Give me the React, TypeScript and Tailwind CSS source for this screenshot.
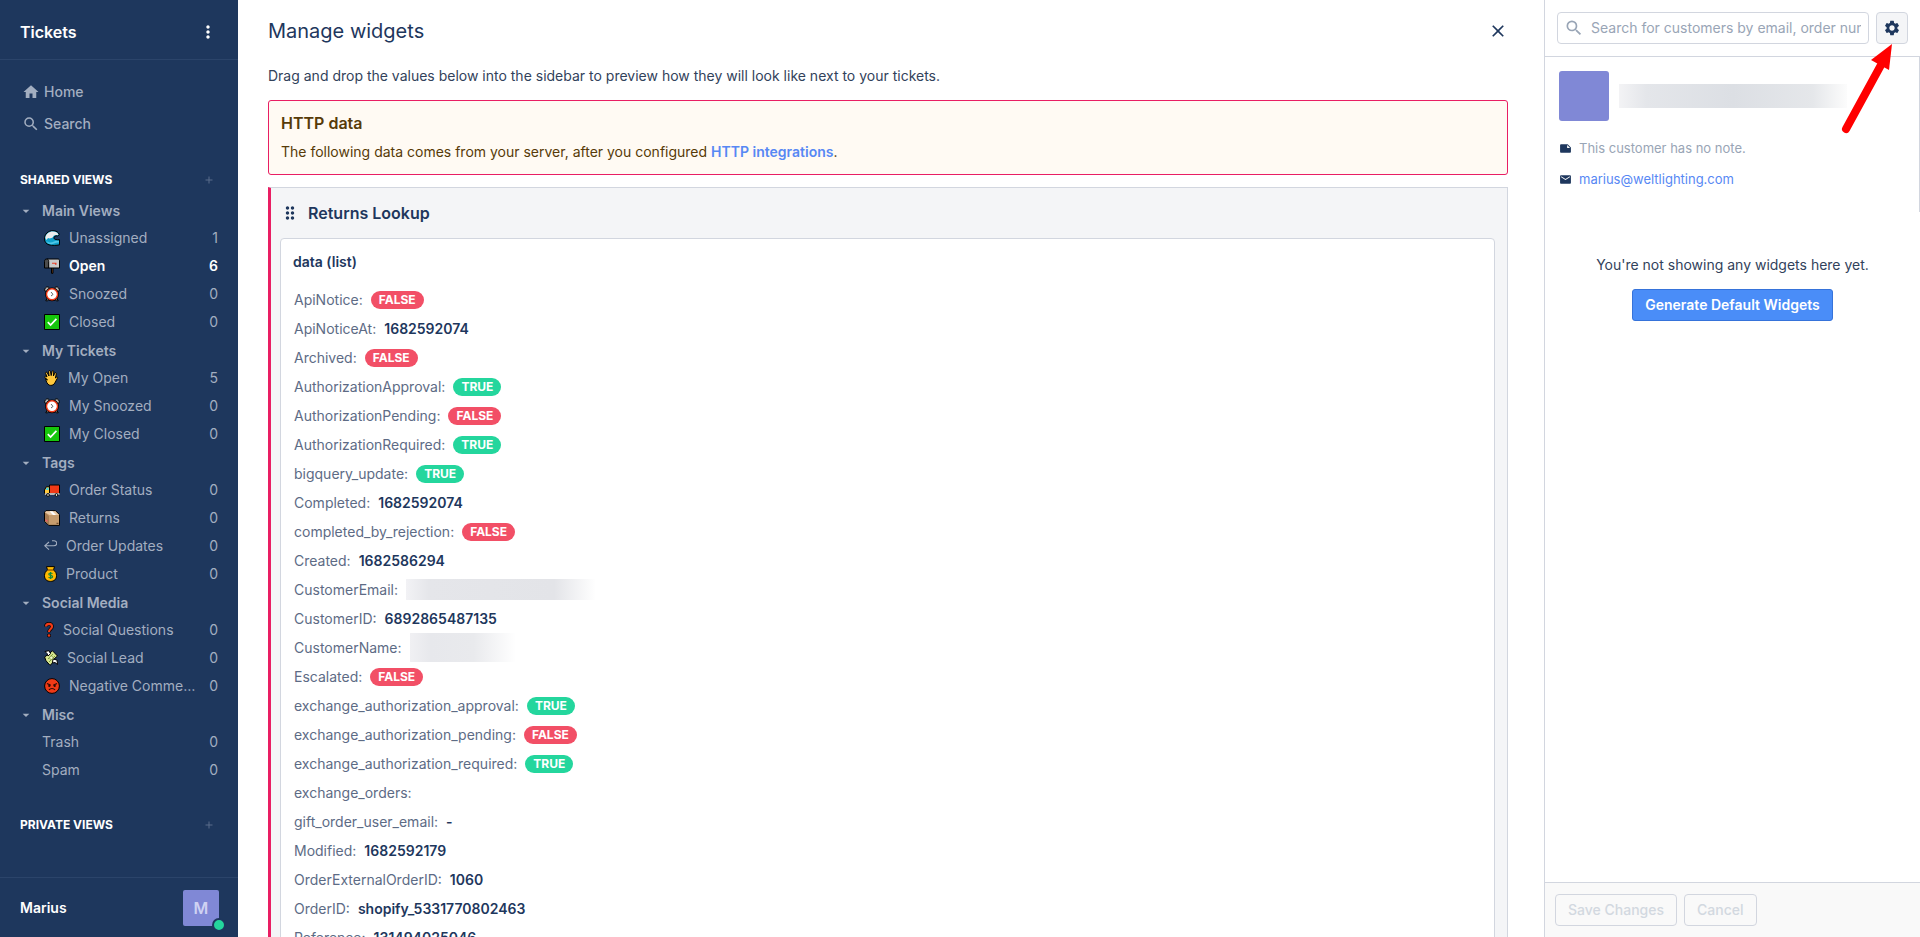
import type { ReactNode } from "react";
import {
  MdAdd,
  MdArrowDropDown,
  MdClose,
  MdDragIndicator,
  MdEmail,
  MdHome,
  MdMoreVert,
  MdNote,
  MdSearch,
  MdSettings,
} from "react-icons/md";

type IconName =
  | "wave"
  | "mailbox"
  | "clock"
  | "check"
  | "hand"
  | "truck"
  | "package"
  | "reply"
  | "moneybag"
  | "question"
  | "cash"
  | "angry";

const outline = { stroke: "#000", strokeWidth: 1, strokeLinejoin: "round" as const };

const icons: Record<IconName, { width: number; art: ReactNode }> = {
  wave: {
    width: 16,
    art: (
      <>
        <path d="M.5 9C.5 4 4 .7 9 .7c3.200 0 5.600 1.500 6.300 4l-1.700 1.200C11.500 5.400 9.600 6.500 10 8.300c.4 1.300 2.400 1.600 5.500 1.400v5.100c-3 .7-7.500.9-10.500 0C2.300 14 .5 12 .5 9z" fill="#0fa0cb" {...outline} />
        <path d="M1.300 8C1.800 3.800 5 1.400 8.800 1.400c2.800 0 4.800 1.100 5.700 3l-1.300.8c-2-.6-3.700.1-4.300 2L7.500 8 5.500 8.500 4 8 2.500 10z" fill="#ececec" />
        <path d="M2 10.500c2 2.500 5.500 2.500 8 1s4-.5 5-.5v1.500c-2 0-3.500 0-5 1-3 1.500-6 1-8-3z" fill="#4fc8e8" />
      </>
    ),
  },
  mailbox: {
    width: 16,
    art: (
      <>
        <path d="M7.500 9h1.500v6.300h-1.500z" fill="#8a4b1c" {...outline} />
        <path d="M3 1h11c1 0 1.500.8 1.500 2v7h-11z" fill="#c9c9c9" {...outline} />
        <path d="M.5 3.500C.5 2 1.300 1 2.700 1s2 1 2 2.500V10H.5z" fill="#4c4c4c" {...outline} />
        <path d="M8 4.700h4.500v2H11v-1H8z" fill="#e8402a" />
      </>
    ),
  },
  clock: {
    width: 16,
    art: (
      <>
        <path d="M3 12.500l-1.200 2.300h2l1-1.300M13 12.500l1.200 2.300h-2l-1-1.300" fill="#b4b4b4" {...outline} />
        <path d="M.6 4.600C.4 2.500 1.800.8 4 .8l1.500 1.100-3.200 3.600zM15.400 4.600c.2-2.100-1.200-3.800-3.400-3.800l-1.500 1.100 3.200 3.600z" fill="#b4b4b4" {...outline} />
        <circle cx="8" cy="8.300" r="5.900" fill="#fff" stroke="#000" strokeWidth="2" />
        <circle cx="8" cy="8.300" r="5.500" fill="#fff" stroke="#f03a17" strokeWidth="1.400" />
        <path d="M7 6l2 2.400L7 10" fill="none" stroke="#555" strokeWidth=".9" />
      </>
    ),
  },
  check: {
    width: 16,
    art: (
      <>
        <path d="M.5.5h15v15H.5z" fill="#16c60c" {...outline} />
        <path d="M3.800 8.200l2.800 2.900 5.800-6.300" fill="none" stroke="#fff" strokeWidth="1.700" />
      </>
    ),
  },
  hand: {
    width: 15,
    art: (
      <path d="M3.500 10L1 7.500C.3 6.500 1.300 5.800 2.200 6.500L3 7 1.600 3.400c-.3-1.300 1.200-1.700 1.700-.6L5 6 4.600 1.700C4.600.4 6.200.3 6.500 1.500L7.200 5.600 8 1.500C8.300.3 9.900.5 9.800 1.800L9.400 6l1.300-2.700c.6-1.100 2-.6 1.600.7L11.400 8l1-.8c.8-.6 1.600.2 1 1L10.800 13c-1 1.700-2.300 2.400-4 2.400-2.400 0-3.700-1.800-4.600-4.400L1.500 8.500z" fill="#ffc83d" {...outline} />
    ),
  },
  truck: {
    width: 16,
    art: (
      <>
        <path d="M5.500 3h10v8.500h-10z" fill="#f03a17" {...outline} />
        <path d="M.5 12.200V8l1.800-3.200h3.200v7.400z" fill="#ffc83d" {...outline} />
        <path d="M1.800 8l1-2.200h1.700V8z" fill="#37d8ef" />
        <path d="M.8 11h14.700v2H.8z" fill="#b4b4b4" />
        <circle cx="4" cy="13" r="1.400" fill="#e8e8e8" {...outline} />
        <circle cx="12.500" cy="13" r="1.400" fill="#e8e8e8" {...outline} />
      </>
    ),
  },
  package: {
    width: 16,
    art: (
      <>
        <path d="M.5 2.200L2 .7h9.500l4 4v10.700H5L.5 11.500z" fill="#c69c6d" {...outline} />
        <path d="M1 2.500L5 6v9L1 11.300z" fill="#a67c52" />
        <path d="M1 2.300L2.300 1.200h9L15 5H5.500z" fill="#e9cba8" />
        <path d="M5.500 1.200h3L12 5H9z" fill="#fff" />
        <path d="M1.500 9l2 1.500V12l-2-1.300z" fill="#f15a6b" />
        <path d="M12.500 13.300h2" stroke="#5b3b1e" strokeWidth="1" />
      </>
    ),
  },
  reply: {
    width: 13,
    art: (
      <path d="M5 4L.8 7.800 5 11.600M1 7.800h8.700c4 0 4-5 .3-5H8" fill="none" stroke="#a3aec0" strokeWidth="1.100" />
    ),
  },
  moneybag: {
    width: 13,
    art: (
      <>
        <path d="M2.500.6h8L9.500 4c2 1.300 3 3.300 3 5.600 0 3.800-2.300 5.800-6 5.800S.5 13.400.5 9.600C.5 7.300 1.500 5.300 3.500 4z" fill="#ffb900" {...outline} />
        <path d="M3 4h7" stroke="#6b3d00" strokeWidth="1" />
        <path d="M8.500 7.700c-.8-1-3.700-1-3.700.5s3.800 1 3.800 2.500-3 1.600-4 .5M6.600 6v7" fill="none" stroke="#10893e" strokeWidth="1.200" />
      </>
    ),
  },
  question: {
    width: 10,
    art: (
      <>
        <path d="M2 4.500C2 2.500 3.200 1.800 5 1.800s3 1 3 2.700C8 7 5 7 5 10.300" fill="none" stroke="#000" strokeWidth="3.600" />
        <circle cx="5" cy="13.500" r="2" fill="#000" />
        <path d="M2 4.500C2 2.500 3.200 1.800 5 1.800s3 1 3 2.700C8 7 5 7 5 10" fill="none" stroke="#f03a17" strokeWidth="2.200" />
        <circle cx="5" cy="13.500" r="1.300" fill="#f03a17" />
      </>
    ),
  },
  cash: {
    width: 14,
    art: (
      <>
        <path d="M.6 7L4 4.500 8.500.8l5 5.200-3.300 2.800L8 13.500l-2 1.800-4-4.500z" fill="#d5e58f" {...outline} />
        <path d="M1 1.500l4-.8 1.500 3L4 6 3 3.500zM9 9l4 1 .5 4.500-2.500-2-2.500.5z" fill="#fff" {...outline} />
        <path d="M4 9l5-5M5 12l6-6" stroke="#7c9a3d" strokeWidth="1" />
        <circle cx="7.300" cy="7.800" r="1.700" fill="#f3f8cf" stroke="#7c9a3d" strokeWidth=".7" />
      </>
    ),
  },
  angry: {
    width: 16,
    art: (
      <>
        <circle cx="8" cy="8" r="7.400" fill="#f03a17" {...outline} />
        <path d="M3 5.500l3.800 1.700M13 5.500L9.200 7.200M5 12c1.500-2 4.500-2 6 0" fill="none" stroke="#2b0b05" strokeWidth="1.200" />
        <circle cx="5.300" cy="7.900" r="1.100" fill="#2b0b05" />
        <circle cx="10.700" cy="7.900" r="1.100" fill="#2b0b05" />
      </>
    ),
  },
};

function ViewIcon({ name }: { name: IconName }) {
  const { width, art } = icons[name];
  return (
    <svg width={width} height={16} viewBox={`0 0 ${width} 16`} className="shrink-0" aria-hidden="true">
      {art}
    </svg>
  );
}

type View = { label: string; count: number; icon?: IconName; active?: boolean };

const groups: { title: string; views: View[] }[] = [
  {
    title: "Main Views",
    views: [
      { label: "Unassigned", count: 1, icon: "wave" },
      { label: "Open", count: 6, icon: "mailbox", active: true },
      { label: "Snoozed", count: 0, icon: "clock" },
      { label: "Closed", count: 0, icon: "check" },
    ],
  },
  {
    title: "My Tickets",
    views: [
      { label: "My Open", count: 5, icon: "hand" },
      { label: "My Snoozed", count: 0, icon: "clock" },
      { label: "My Closed", count: 0, icon: "check" },
    ],
  },
  {
    title: "Tags",
    views: [
      { label: "Order Status", count: 0, icon: "truck" },
      { label: "Returns", count: 0, icon: "package" },
      { label: "Order Updates", count: 0, icon: "reply" },
      { label: "Product", count: 0, icon: "moneybag" },
    ],
  },
  {
    title: "Social Media",
    views: [
      { label: "Social Questions", count: 0, icon: "question" },
      { label: "Social Lead", count: 0, icon: "cash" },
      { label: "Negative Comments", count: 0, icon: "angry" },
    ],
  },
  {
    title: "Misc",
    views: [
      { label: "Trash", count: 0 },
      { label: "Spam", count: 0 },
    ],
  },
];

type Value = string | boolean | { hidden: "wide" | "narrow" };

const fields: [string, Value][] = [
  ["ApiNotice", false],
  ["ApiNoticeAt", "1682592074"],
  ["Archived", false],
  ["AuthorizationApproval", true],
  ["AuthorizationPending", false],
  ["AuthorizationRequired", true],
  ["bigquery_update", true],
  ["Completed", "1682592074"],
  ["completed_by_rejection", false],
  ["Created", "1682586294"],
  ["CustomerEmail", { hidden: "wide" }],
  ["CustomerID", "6892865487135"],
  ["CustomerName", { hidden: "narrow" }],
  ["Escalated", false],
  ["exchange_authorization_approval", true],
  ["exchange_authorization_pending", false],
  ["exchange_authorization_required", true],
  ["exchange_orders", ""],
  ["gift_order_user_email", "-"],
  ["Modified", "1682592179"],
  ["OrderExternalOrderID", "1060"],
  ["OrderID", "shopify_5331770802463"],
  ["Reference", "131494025046"],
];

function FieldValue({ value }: { value: Value }) {
  if (typeof value === "boolean") {
    return (
      <span
        className={`flex h-[18px] items-center rounded-full px-2 text-xs font-bold text-white ${
          value ? "bg-[#24d69d]" : "bg-[#f24f66]"
        }`}
      >
        {value ? "TRUE" : "FALSE"}
      </span>
    );
  }
  if (typeof value === "object") {
    return (
      <span
        className={
          value.hidden === "wide"
            ? "block h-[21px] w-[190px] bg-[linear-gradient(90deg,#f2f2f5,#e5e6ea_12%,#e3e4e8_78%,#ffffff)]"
            : "block h-[29px] w-[106px] bg-[linear-gradient(90deg,#f0f0f3,#e7e8ec_20%,#e9eaed_60%,#ffffff)]"
        }
      />
    );
  }
  return <span className="font-semibold text-[#1e375d]">{value}</span>;
}

function SectionTitle({ children }: { children: string }) {
  return (
    <div className="flex h-7 items-center justify-between pr-5 pl-5">
      <h2 className="text-xs font-bold text-white">{children}</h2>
      <button type="button" aria-label={`Add to ${children.toLowerCase()}`} className="pr-[3px] text-[#5a6d8b]">
        <MdAdd size={12} />
      </button>
    </div>
  );
}

function Sidebar() {
  return (
    <aside className="flex w-[238px] shrink-0 flex-col bg-[#1e375d] text-sm text-[#a3aec0]">
      <header className="flex h-[60px] shrink-0 items-center justify-between border-b border-[#2b446a] pt-1 pr-5 pl-5 text-white">
        <h1 className="text-base font-semibold">Tickets</h1>
        <button type="button" aria-label="More options">
          <MdMoreVert size={20} />
        </button>
      </header>
      <div className="min-h-0 flex-1 overflow-hidden">
        <nav className="pt-4 pl-[22px] font-medium">
          <a href="#home" className="flex h-8 items-center gap-1">
            <MdHome size={18} /> Home
          </a>
          <a href="#search" className="flex h-8 items-center gap-1">
            <MdSearch size={18} /> Search
          </a>
        </nav>
        <div className="pt-[26px]">
          <SectionTitle>SHARED VIEWS</SectionTitle>
          <div className="pt-[3px]">
            {groups.map((group) => (
              <section key={group.title}>
                <button type="button" className="flex h-7 w-full items-center pl-[18px] text-left font-semibold">
                  <MdArrowDropDown size={16} className="mr-2" />
                  {group.title}
                </button>
                <ul>
                  {group.views.map((view) => (
                    <li key={view.label}>
                      <a
                        href="#view"
                        className={`flex h-7 items-center pr-5 pb-[3px] ${view.icon ? "gap-[9px] pl-11" : "pl-[42px]"} ${
                          view.active ? "font-semibold text-white" : ""
                        }`}
                      >
                        {view.icon && <ViewIcon name={view.icon} />}
                        <span className="min-w-0 flex-1 truncate">{view.label}</span>
                        <span>{view.count}</span>
                      </a>
                    </li>
                  ))}
                </ul>
              </section>
            ))}
          </div>
        </div>
        <div className="pt-[26px]">
          <SectionTitle>PRIVATE VIEWS</SectionTitle>
        </div>
      </div>
      <footer className="flex h-[60px] shrink-0 items-center justify-between border-t border-[#2b446a] pr-[19px] pl-5 text-white">
        <span className="font-semibold">Marius</span>
        <div className="relative flex size-9 items-center justify-center rounded-xs bg-[#8088d6] text-base font-semibold text-[#cfd2f2]">
          M
          <span className="absolute -right-[7px] -bottom-1.5 size-[14px] rounded-full border-2 border-[#1e375d] bg-[#24d69d]" />
        </div>
      </footer>
    </aside>
  );
}

function Manager() {
  return (
    <main className="min-w-0 flex-1 overflow-hidden pr-9 pl-[30px]">
      <header className="flex h-[62px] items-center justify-between">
        <h2 className="text-xl text-[#1e375d]">Manage widgets</h2>
        <button type="button" aria-label="Close" className="text-[#1e375d]">
          <MdClose size={20} />
        </button>
      </header>
      <p className="pt-1 pb-[14px] text-sm">Drag and drop the values below into the sidebar to preview how they will look like next to your tickets.</p>
      <section className="rounded-[3px] border border-[#e91e63] bg-[#fffaf3] px-3 pt-[10px] pb-3 text-[#573a08]">
        <h3 className="pb-[7px] text-base font-semibold">HTTP data</h3>
        <p className="text-sm">
          The following data comes from your server, after you configured{" "}
          <a href="#integrations" className="font-semibold text-[#5788f4]">
            HTTP integrations
          </a>
          .
        </p>
      </section>
      <section className="mt-3 border-t border-r border-l-3 border-[#d2d6df] border-l-[#e91e63] bg-[#f4f5f7] pr-3 pl-[9px]">
        <h3 className="flex h-[50px] items-center gap-2 text-base font-semibold text-[#1e375d]">
          <MdDragIndicator size={20} />
          Returns Lookup
        </h3>
        <div className="rounded-t-sm border border-[#d2d6df] bg-white px-3 pt-3">
          <h4 className="pb-3 text-sm leading-[22px] font-semibold text-[#1e375d]">data (list)</h4>
          <dl className="pl-px text-sm">
            {fields.map(([label, value]) => (
              <div key={label} className="flex h-[29px] items-center gap-2">
                <dt className="text-[#5d6b85]">{label}:</dt>
                <dd>
                  <FieldValue value={value} />
                </dd>
              </div>
            ))}
          </dl>
        </div>
      </section>
    </main>
  );
}

function CustomerPanel() {
  return (
    <aside className="flex w-[376px] shrink-0 flex-col border-l border-[#d2d6df] text-sm">
      <header className="flex h-[57px] shrink-0 items-center gap-[7px] border-b border-[#d2d6df] pr-3 pl-3">
        <label className="flex h-8 min-w-0 flex-1 items-center gap-[7px] rounded-sm border border-[#d2d6df] pr-[7px] pl-[6px] text-[#99a5b6]">
          <MdSearch size={20} className="shrink-0" />
          <input
            type="text"
            aria-label="Search for customers"
            placeholder="Search for customers by email, order number"
            className="min-w-0 flex-1 outline-none placeholder:text-[#99a5b6]"
          />
        </label>
        <button
          type="button"
          aria-label="Widget settings"
          className="relative flex size-8 items-center justify-center rounded-sm border border-[#d2d6df] bg-[#f4f5f7] text-[#1e375d]"
        >
          <MdSettings size={18} />
          <svg
            className="pointer-events-none absolute top-[30px] right-[15px]"
            width="52"
            height="92"
            viewBox="0 0 52 92"
            aria-hidden="true"
          >
            <path d="M6 86L41 22" stroke="#f00" strokeWidth="8" strokeLinecap="round" />
            <path d="M52 1L31 17l18 10z" fill="#f00" />
          </svg>
        </button>
      </header>
      <div className="min-h-0 flex-1">
        <section className="h-[155px] border-r border-[#d2d6df] pt-[14px] pl-[14px]">
          <div className="flex items-center gap-[10px]">
            <span className="size-[50px] rounded-[3px] bg-[#8088d6]" />
            <span className="h-6 w-[228px] bg-[linear-gradient(90deg,#f3f3f5,#e4e6ea_12%,#dcdfe4_50%,#e5e7ea_85%,#fcfcfc)]" />
          </div>
          <p className="mt-4 flex h-[22px] items-center gap-[7px] text-[13px] text-[#99a5b6]">
            <MdNote size={13} className="text-[#1e375d]" />
            This customer has no note.
          </p>
          <p className="mt-[9px] flex h-[22px] items-center gap-[7px] text-[13px]">
            <MdEmail size={13} className="text-[#1e375d]" />
            <a href="mailto:marius@weltlighting.com" className="text-[#5788f4]">
              marius@weltlighting.com
            </a>
          </p>
        </section>
        <div className="flex flex-col items-center gap-[14px] pt-[43px]">
          <p>You're not showing any widgets here yet.</p>
          <button
            type="button"
            className="h-8 rounded-[3px] border border-[#3673da] bg-[#4a8df8] px-3 font-semibold text-white"
          >
            Generate Default Widgets
          </button>
        </div>
      </div>
      <footer className="flex h-[55px] shrink-0 items-center gap-[7px] border-t border-[#d2d6df] bg-[#f9f9f9] pl-[10px] font-medium text-[#d2d8e0]">
        <button type="button" disabled className="h-8 rounded-sm border border-[#d2d6df] px-3">
          Save Changes
        </button>
        <button type="button" disabled className="h-8 rounded-sm border border-[#d2d6df] px-3">
          Cancel
        </button>
      </footer>
    </aside>
  );
}

export default function App() {
  return (
    <div className="flex h-screen overflow-hidden bg-white font-['Inter',sans-serif] text-[#32425b]">
      <Sidebar />
      <Manager />
      <CustomerPanel />
    </div>
  );
}
